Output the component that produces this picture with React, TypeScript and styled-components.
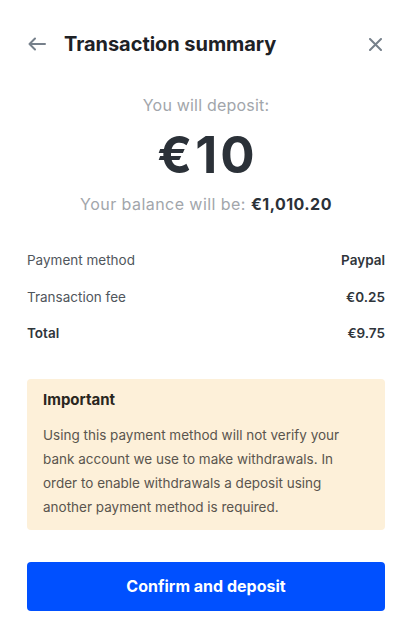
import React from "react";
import styled, { createGlobalStyle } from "styled-components";

const Global = createGlobalStyle`
  html, body { margin: 0; padding: 0; background: #ffffff; }
  body { font-family: Inter, "Noto Sans", sans-serif; -webkit-font-smoothing: antialiased; }
  * { box-sizing: border-box; }
`;

const Page = styled.div`
  width: 413px;
  height: 640px;
  padding: 0 28px 0 27px;
  display: flex;
  flex-direction: column;
  background: #fff;
`;

const Header = styled.div`
  display: flex;
  align-items: center;
  height: 28px;
  margin-top: 30px;
`;

const IconButton = styled.button`
  border: 0;
  background: none;
  padding: 0;
  width: 20px;
  height: 20px;
  display: flex;
  align-items: center;
  justify-content: center;
  color: #76808b;
  cursor: pointer;
`;

const Title = styled.h1`
  margin: 0 0 0 17px;
  flex: 1;
  font-size: 20px;
  font-weight: 700;
  color: #1d2125;
  letter-spacing: -0.05px;
`;

const Summary = styled.div`
  display: flex;
  flex-direction: column;
  align-items: center;
  margin-top: 37px;
`;

const Muted = styled.div`
  font-size: 16px;
  color: #a2a6ab;
  line-height: 20px;
  letter-spacing: 0.2px;
`;

const Amount = styled.div`
  font-size: 51px;
  font-weight: 700;
  color: #2b3138;
  line-height: 56px;
  margin-top: 12px;
  letter-spacing: 3px;
  padding-left: 3px;
`;

const Balance = styled(Muted)`
  margin-top: 11px;
  letter-spacing: 0.45px;
  b { color: #2b3138; font-weight: 700; }
`;

const Rows = styled.div`
  display: flex;
  flex-direction: column;
  margin-top: 28px;
`;

const Row = styled.div<{ $strong?: boolean }>`
  display: flex;
  justify-content: space-between;
  align-items: center;
  height: 36.5px;
  font-size: 13.5px;
  color: ${(p) => (p.$strong ? "#2f353b" : "#50565c")};
  font-weight: ${(p) => (p.$strong ? 600 : 400)};
  span:last-child { font-weight: 600; color: #2f353b; }
`;

const Notice = styled.div`
  margin-top: 27px;
  background: #fdf0d9;
  border-radius: 4px;
  padding: 10px 16px 10px 16px;
`;

const NoticeTitle = styled.div`
  font-size: 15px;
  font-weight: 700;
  color: #2a2620;
  line-height: 22px;
`;

const NoticeText = styled.p`
  margin: 12px 0 0 0;
  font-size: 13.5px;
  line-height: 24.3px;
  color: #5a554e;
`;

const Confirm = styled.button`
  margin-top: 32px;
  height: 49px;
  border: 0;
  border-radius: 4px;
  background: #0050ff;
  color: #fff;
  font-family: Inter, "Noto Sans", sans-serif;
  font-size: 16px;
  font-weight: 700;
  cursor: pointer;
`;

export default function App() {
  return (
    <>
      <Global />
      <Page>
        <Header>
          <IconButton aria-label="Back">
            <svg width="18" height="14" viewBox="0 0 18 14" fill="none" stroke="currentColor" strokeWidth="2" strokeLinecap="round" strokeLinejoin="round">
              <path d="M17 7H1.5M7 1.5 1.5 7 7 12.5" />
            </svg>
          </IconButton>
          <Title>Transaction summary</Title>
          <IconButton aria-label="Close">
            <svg width="13" height="13" viewBox="0 0 13 13" fill="none" stroke="currentColor" strokeWidth="2" strokeLinecap="round">
              <path d="M1 1l11 11M12 1 1 12" />
            </svg>
          </IconButton>
        </Header>
        <Summary>
          <Muted>You will deposit:</Muted>
          <Amount>€10</Amount>
          <Balance>
            Your balance will be: <b>€1,010.20</b>
          </Balance>
        </Summary>
        <Rows>
          <Row>
            <span>Payment method</span>
            <span>Paypal</span>
          </Row>
          <Row>
            <span>Transaction fee</span>
            <span>€0.25</span>
          </Row>
          <Row $strong>
            <span>Total</span>
            <span>€9.75</span>
          </Row>
        </Rows>
        <Notice>
          <NoticeTitle>Important</NoticeTitle>
          <NoticeText>
            Using this payment method will not verify your bank account we use to make withdrawals. In order to enable withdrawals a deposit using another payment method is required.
          </NoticeText>
        </Notice>
        <Confirm>Confirm and deposit</Confirm>
      </Page>
    </>
  );
}
